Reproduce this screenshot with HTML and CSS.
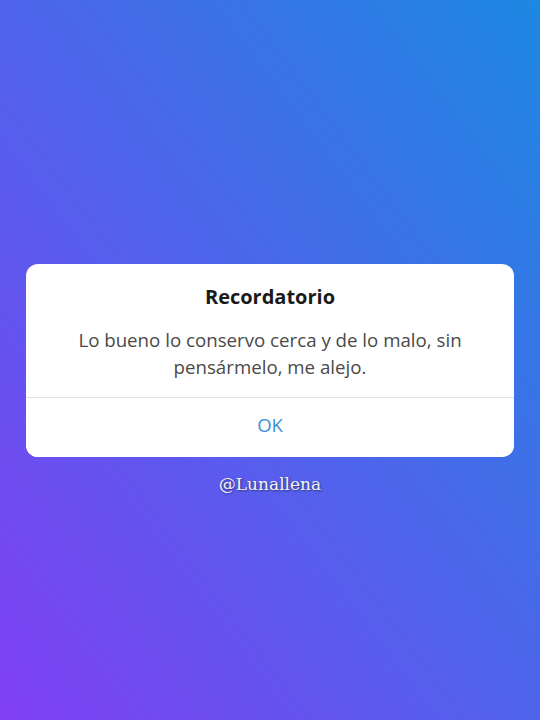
FILE: index.html
```html
<!DOCTYPE html>
<html lang="es">
<head>
  <meta charset="UTF-8" />
  <meta name="viewport" content="width=device-width, initial-scale=1.0" />
  <title>Recordatorio</title>
  <link rel="stylesheet" href="styles.css">
</head>
<body>
  <div class="screen">
    <div class="top"></div>
    <!-- Cuadro de diálogo -->
    <div class="dialog">
      <h1 class="dialog-title">Recordatorio</h1>
      <p class="dialog-text">Lo bueno lo conservo cerca y de lo malo, sin pensármelo, me alejo.</p>
      <button class="dialog-btn">OK</button>
    </div>
    <div class="bottom">
      <div class="handle">@Lunallena</div>
    </div>
  </div>
</body>
</html>
```

FILE: styles.css
```css
/* ===== Base ===== */
* { box-sizing: border-box; margin: 0; padding: 0; }
html, body { height: 100%; }
body { font-family: "Open Sans", "Noto Sans", sans-serif; background: linear-gradient(to top right, #803ff3, #1d88e2); }

/* ===== Pantalla ===== */
.screen { height: 720px; display: grid; grid-template-rows: 1fr auto 1fr; padding: 0 26px; }

/* ===== Diálogo ===== */
.dialog { background: #fff; border-radius: 12px; text-align: center; overflow: hidden; }
.dialog-title { font-size: 20px; line-height: 24px; font-weight: 700; color: #1a1a1a; padding-top: 21px; }
.dialog-text { font-size: 18.7px; line-height: 27px; color: #4a4a4a; padding: 17px 20px 17px; }
.dialog-btn { display: block; width: 100%; height: 60px; border: none; border-top: 1px solid #e2e2e2; background: #fff; color: #3b8fd8; font-family: inherit; font-size: 18.5px; cursor: pointer; padding-bottom: 6px; }

/* ===== Firma ===== */
.bottom { display: flex; justify-content: center; padding-top: 17px; }
.handle { font-family: "DejaVu Serif", "Liberation Serif", serif; font-size: 17px; color: #f2f2f2; text-shadow: 1px 1px 2px rgba(0,0,0,0.45); }
```
